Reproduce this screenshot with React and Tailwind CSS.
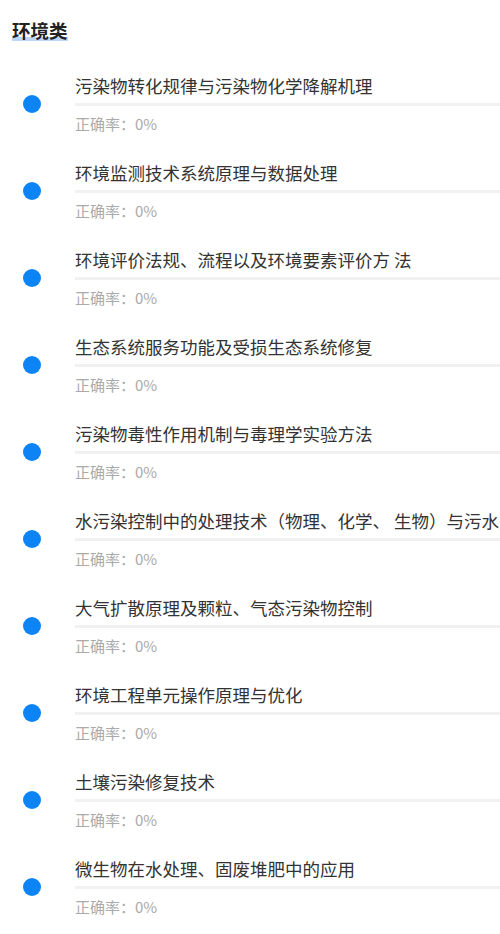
const topics = [
  "污染物转化规律与污染物化学降解机理",
  "环境监测技术系统原理与数据处理",
  "环境评价法规、流程以及环境要素评价方 法",
  "生态系统服务功能及受损生态系统修复",
  "污染物毒性作用机制与毒理学实验方法",
  "水污染控制中的处理技术（物理、化学、 生物）与污水处理工艺",
  "大气扩散原理及颗粒、气态污染物控制",
  "环境工程单元操作原理与优化",
  "土壤污染修复技术",
  "微生物在水处理、固废堆肥中的应用",
];

export default function App() {
  return (
    <div
      className="w-[500px] h-[934px] bg-white overflow-hidden"
      style={{ fontFamily: '"Noto Sans CJK SC", "Noto Sans", sans-serif' }}
    >
      {/* Header */}
      <div className="pl-3 pt-[18px]">
        <span className="inline-block text-[18.5px] leading-6 font-bold text-[#222] bg-[linear-gradient(to_bottom,transparent_0%,transparent_78%,#bcd7f5_78%,#bcd7f5_94%,transparent_94%)]">
          环境类
        </span>
      </div>

      {/* Topic list */}
      <div className="mt-[31px] flex flex-col gap-[27px]">
        {topics.map((t, i) => (
          <div key={i} className="flex items-center">
            <div className="w-[75px] shrink-0 pl-[23px]">
              <div className="w-[18px] h-[18px] rounded-full bg-[#0c84f5]" />
            </div>
            <div className="flex-1 min-w-0 overflow-hidden">
              <div className="text-[17.5px] leading-6 text-[#333] whitespace-nowrap">{t}</div>
              <div className="mt-[5px] h-[3px] w-full bg-[#f1f1f1]" />
              <div className="mt-[8px] text-[15px] leading-5 text-[#aaa] whitespace-nowrap">
                正确率：0%
              </div>
            </div>
          </div>
        ))}
      </div>
    </div>
  );
}
